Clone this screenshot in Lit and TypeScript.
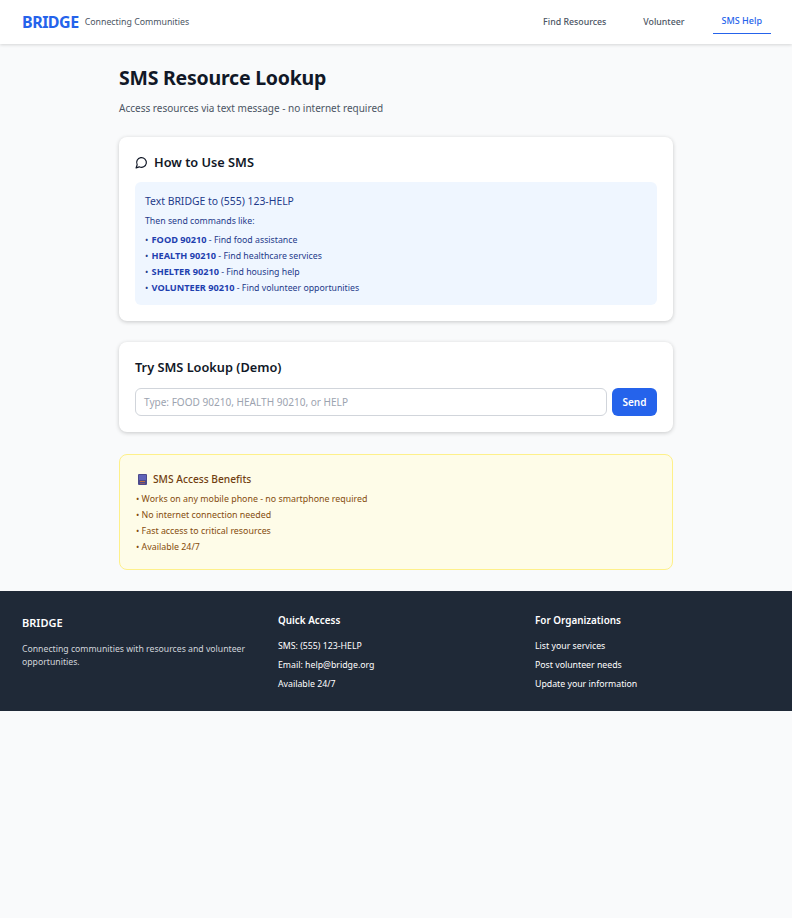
import { LitElement, html, css } from "lit";
import { customElement } from "lit/decorators.js";

@customElement("app-root")
export class AppRoot extends LitElement {
  static styles = css`
    :host { display: block; min-height: 918px; background: #f9fafb; font-family: "Noto Sans", "Open Sans", sans-serif; color: #111827; }
    * { box-sizing: border-box; }
    header { height: 44px; background: #fff; box-shadow: 0 1px 3px rgba(0,0,0,.15); display: flex; align-items: center; justify-content: space-between; padding: 0 21px 0 22px; }
    .brand { display: flex; align-items: center; gap: 6px; }
    .logo { font-size: 16px; font-weight: 700; color: #2563eb; letter-spacing: -0.5px; }
    .tag { font-size: 8.8px; color: #4b5563; }
    nav { display: flex; gap: 19px; height: 100%; align-items: center; }
    nav a { font-size: 8.8px; font-weight: 500; color: #4b5563; padding: 0 9px; height: 26px; display: flex; align-items: center; }
    nav a.on { font-size: 9px; color: #2563eb; border-bottom: 1px solid #2563eb; margin-bottom: 2px; }
    main { width: 554px; margin: 0 auto; padding-top: 20px; }
    h1 { margin: 0; font-size: 19.5px; line-height: 27px; font-weight: 700; letter-spacing: -0.23px; }
    .sub { margin: 9px 0 0; font-size: 10px; line-height: 16px; color: #4b5563; }
    .card { background: #fff; border-radius: 8px; box-shadow: 0 1px 4px rgba(0,0,0,.2); padding: 16px; margin-top: 21px; }
    h2 { margin: 0; font-size: 12.75px; line-height: 18px; font-weight: 600; display: flex; align-items: center; gap: 6px; }
    .info { margin-top: 11px; background: #eff6ff; border-radius: 6px; padding: 10px 10px 9px; color: #1e3a8a; font-size: 8.75px; line-height: 16px; }
    .info h3 { margin: 0; font-size: 10.4px; font-weight: 400; line-height: 18px; }
    .info p { margin: 3px 0 3px; }
    .info b { font-size: 9.2px; font-weight: 700; color: #1e40af; }
    .bullet { margin-right: 1px; }
    .row { display: flex; gap: 5px; margin-top: 12px; }
    .input { flex: 1; height: 28px; border: 1px solid #d1d5db; border-radius: 6px; padding: 0 8px; font-size: 10.06px; display: flex; align-items: center; color: #9ca3af; }
    .send { width: 45px; height: 28px; border-radius: 6px; background: #2563eb; color: #fff; font-size: 10px; font-weight: 600; display: flex; align-items: center; justify-content: center; }
    .benefits { margin-top: 22px; background: #fefce8; border: 1px solid #fef08a; border-radius: 8px; padding: 16px 16px 14px; font-size: 8.85px; line-height: 16px; color: #854d0e; }
    .benefits h3 { margin: 0 0 4px; font-size: 10.2px; line-height: 16px; font-weight: 500; color: #713f12; display: flex; gap: 6px; align-items: center; }
    .benefits svg { margin-left: 2px; }
    footer { margin-top: 21px; height: 120px; background: #1f2937; color: #fff; padding: 21px; display: grid; grid-template-columns: repeat(3, 1fr); gap: 21px; font-size: 8.75px; line-height: 19px; }
    footer h4 { margin: 0 0 9px; font-size: 9.9px; line-height: 16px; font-weight: 600; }
    footer h4.big { font-size: 11px; line-height: 18px; margin: 2px 0 0; }
    footer .first { margin-left: 1px; }
    footer .muted { color: #d1d5db; font-size: 8.7px; line-height: 13px; margin-top: 11px; }
  `;

  render() {
    return html`
      <header>
        <div class="brand"><span class="logo">BRIDGE</span><span class="tag">Connecting Communities</span></div>
        <nav><a>Find Resources</a><a>Volunteer</a><a class="on">SMS Help</a></nav>
      </header>
      <main>
        <h1>SMS Resource Lookup</h1>
        <p class="sub">Access resources via text message - no internet required</p>
        <section class="card">
          <h2><svg width="13" height="13" viewBox="0 0 24 24" fill="none" stroke="#111827" stroke-width="2.2" stroke-linecap="round" stroke-linejoin="round"><path d="M7.9 20A9 9 0 1 0 4 16.1L2 22Z"/></svg>How to Use SMS</h2>
          <div class="info">
            <h3>Text BRIDGE to (555) 123-HELP</h3>
            <p>Then send commands like:</p>
            <div><span class="bullet">•</span> <b>FOOD 90210</b> - Find food assistance</div>
            <div><span class="bullet">•</span> <b>HEALTH 90210</b> - Find healthcare services</div>
            <div><span class="bullet">•</span> <b>SHELTER 90210</b> - Find housing help</div>
            <div><span class="bullet">•</span> <b>VOLUNTEER 90210</b> - Find volunteer opportunities</div>
          </div>
        </section>
        <section class="card">
          <h2>Try SMS Lookup (Demo)</h2>
          <div class="row"><div class="input">Type: FOOD 90210, HEALTH 90210, or HELP</div><div class="send">Send</div></div>
        </section>
        <section class="benefits">
          <h3><svg width="9" height="11" viewBox="0 0 9 11"><rect width="9" height="11" rx="1" fill="#4c4a8c"/><rect x="1" y="1" width="7" height="5" fill="#5f63b8"/><rect x="2" y="7" width="5" height="1" fill="#c2703d"/><rect x="2" y="9" width="5" height="1" fill="#8a5a6a"/></svg>SMS Access Benefits</h3>
          <div>• Works on any mobile phone - no smartphone required</div>
          <div>• No internet connection needed</div>
          <div>• Fast access to critical resources</div>
          <div>• Available 24/7</div>
        </section>
      </main>
      <footer>
        <div class="first"><h4 class="big">BRIDGE</h4><div class="muted">Connecting communities with resources and volunteer opportunities.</div></div>
        <div><h4>Quick Access</h4><div>SMS: (555) 123-HELP</div><div>Email: help@bridge.org</div><div>Available 24/7</div></div>
        <div><h4>For Organizations</h4><div>List your services</div><div>Post volunteer needs</div><div>Update your information</div></div>
      </footer>
    `;
  }
}
